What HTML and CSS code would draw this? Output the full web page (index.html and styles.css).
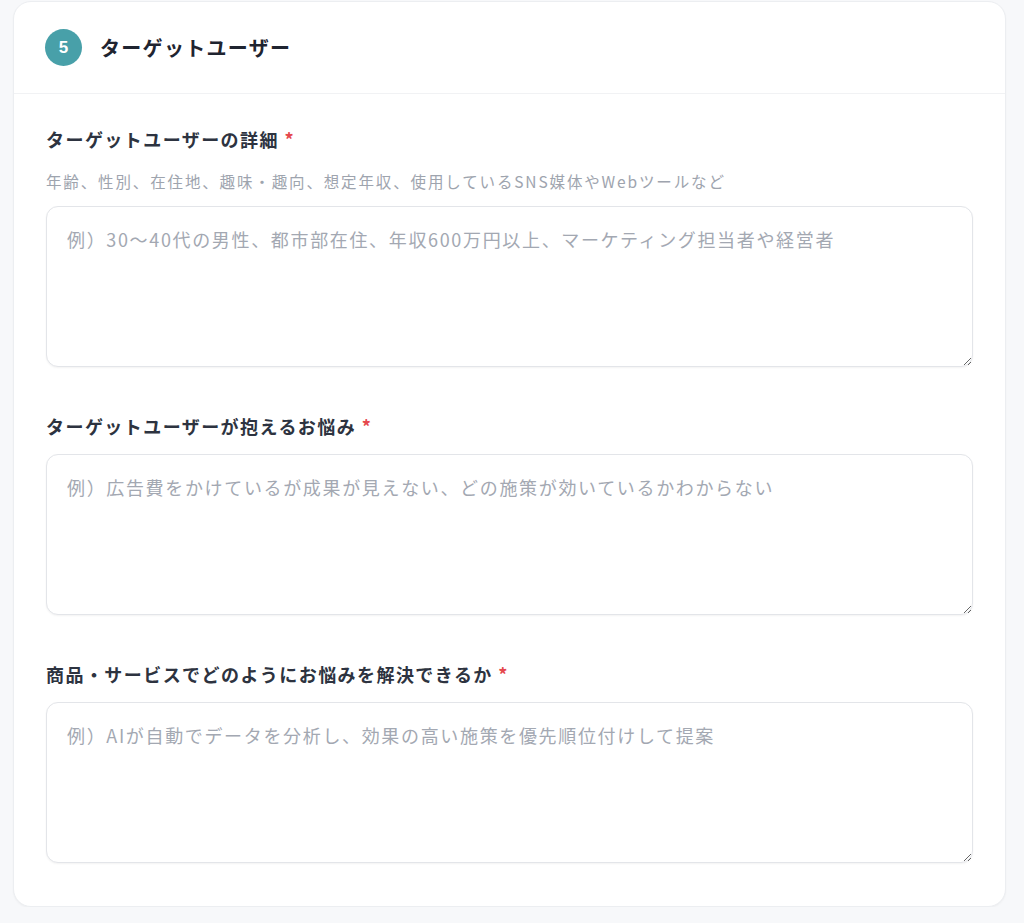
FILE: index.html
```html
<!DOCTYPE html>
<html lang="ja">
<head>
    <meta charset="UTF-8">
    <meta name="viewport" content="width=device-width, initial-scale=1.0">
    <title>ターゲットユーザー</title>
    <link rel="stylesheet" href="styles.css">
</head>
<body>

    <section class="card">
        <div class="card-header">
            <span class="step-badge">5</span>
            <h2>ターゲットユーザー</h2>
        </div>

        <div class="card-body">
            <div class="field">
                <label for="targetDetail">ターゲットユーザーの詳細 <span class="required">*</span></label>
                <p class="help">年齢、性別、在住地、趣味・趣向、想定年収、使用しているSNS媒体やWebツールなど</p>
                <textarea id="targetDetail" placeholder="例）30〜40代の男性、都市部在住、年収600万円以上、マーケティング担当者や経営者"></textarea>
            </div>

            <div class="field">
                <label for="targetPain">ターゲットユーザーが抱えるお悩み <span class="required">*</span></label>
                <textarea id="targetPain" placeholder="例）広告費をかけているが成果が見えない、どの施策が効いているかわからない"></textarea>
            </div>

            <div class="field">
                <label for="solution">商品・サービスでどのようにお悩みを解決できるか <span class="required">*</span></label>
                <textarea id="solution" placeholder="例）AIが自動でデータを分析し、効果の高い施策を優先順位付けして提案"></textarea>
            </div>
        </div>
    </section>

</body>
</html>
```

FILE: styles.css
```css
* {
    margin: 0;
    padding: 0;
    box-sizing: border-box;
}

body {
    background: #f7f8fa;
    font-family: "Noto Sans CJK JP", "Liberation Sans", sans-serif;
    color: #2a2f3a;
}

.card {
    margin: 1px 18px 0 13px;
    background: #fff;
    border: 1px solid #eceef1;
    border-radius: 18px;
    box-shadow: 0 1px 2px rgba(0, 0, 0, 0.04);
}

.card-header {
    display: flex;
    align-items: center;
    gap: 18px;
    padding: 27px 32px 27px 31px;
    border-bottom: 1px solid #f1f2f4;
}

.step-badge {
    width: 37px;
    height: 37px;
    border-radius: 50%;
    background: #48a0a9;
    color: #fff;
    font-weight: bold;
    font-size: 17px;
    display: flex;
    align-items: center;
    justify-content: center;
    font-family: "Liberation Sans", sans-serif;
}

.card-header h2 {
    font-size: 20px;
    line-height: 28px;
    font-weight: bold;
    letter-spacing: 0.065em;
    color: #1f2430;
}

.card-body {
    padding: 33px 32px 43px;
    display: flex;
    flex-direction: column;
    gap: 47px;
}

.field label {
    display: block;
    font-size: 18px;
    line-height: 24px;
    font-weight: bold;
    letter-spacing: 0.08em;
    color: #2d3340;
    margin-bottom: 16px;
}

.field label:has(+ .help) {
    margin-bottom: 20px;
}

.required {
    color: #e5484d;
}

.help {
    font-size: 15.5px;
    line-height: 20px;
    letter-spacing: 0.12em;
    color: #9ea4ae;
    margin-bottom: 15px;
}

textarea {
    display: block;
    width: 100%;
    height: 161px;
    padding: 18px 20px;
    border: 1px solid #e3e5e9;
    border-radius: 12px;
    box-shadow: 0 1px 2px rgba(0, 0, 0, 0.05);
    font-family: inherit;
    font-size: 18px;
    line-height: 28px;
    letter-spacing: 0.092em;
    color: #2a2f3a;
    resize: vertical;
    outline: none;
}

textarea::placeholder {
    color: #a3a8b2;
}
```
